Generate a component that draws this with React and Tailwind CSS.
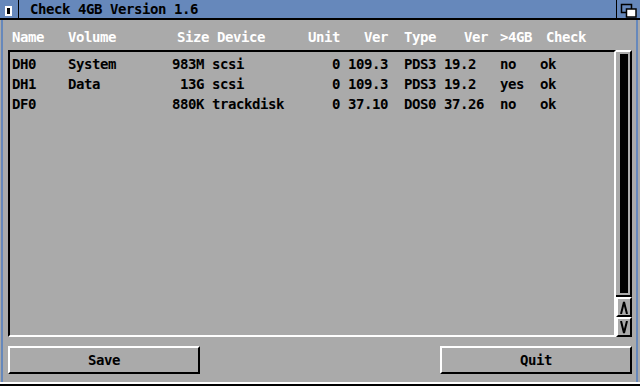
import React from 'react'

const rows = [
  ['DH0', 'System', '983M', 'scsi', '0', '109.3', 'PDS3', '19.2', 'no', 'ok'],
  ['DH1', 'Data', '13G', 'scsi', '0', '109.3', 'PDS3', '19.2', 'yes', 'ok'],
  ['DF0', '', '880K', 'trackdisk', '0', '37.10', 'DOS0', '37.26', 'no', 'ok'],
]

function fmt(r){
  return r[0].padEnd(7) + r[1].padEnd(13) + r[2].padStart(4) + ' ' + r[3].padEnd(14) + ' ' +
    r[4] + ' ' + r[5].padEnd(7) + r[6].padEnd(5) + r[7].padEnd(7) + r[8].padEnd(5) + r[9]
}

export default function App(){
  return (
    <div className="w-[640px] h-[386px] bg-[#aaaaaa] flex flex-col overflow-hidden font-['DejaVu_Sans_Mono',monospace] font-bold text-[14px] tracking-[-0.43px] leading-[20px]">
      <TitleBar />
      <div className="flex-1 ml-[1px] mr-[2px] border-x-2 border-[#6688bb] flex flex-col pl-[5px] pr-[4px]">
        <Header />
        <div className="mt-[3px] h-[287px] flex">
          <div className="flex-1 border-2 border-t-black border-l-black border-b-white border-r-white pt-[2px] pl-[2px] text-black whitespace-pre">
            {rows.map(r => <div key={r[0]}>{fmt(r)}</div>)}
          </div>
          <Scroller />
        </div>
        <div className="mt-[9px] flex justify-between">
          <Button label="Save" />
          <Button label="Quit" />
        </div>
      </div>
      <div className="h-[2px] bg-white" />
      <div className="h-[2px] bg-black" />
    </div>
  )
}

function TitleBar(){
  return (
    <div className="h-[20px] shrink-0 bg-[#6688bb] border-b-2 border-black flex leading-[18px]">
      <div className="w-[19px] border-r border-black flex items-start pl-[5px] pt-[6px]">
        <div className="w-[7px] h-[10px] bg-black border-2 border-white" />
      </div>
      <div className="flex-1 pl-[11px] text-black">Check 4GB Version 1.6</div>
      <div className="w-[24px] border-l border-black">
        <svg width="23" height="18" viewBox="0 0 23 18" className="block">
          <rect x="4.5" y="4.5" width="10" height="8" fill="#6688bb" stroke="black" strokeWidth="1.5" />
          <rect x="9.5" y="9" width="9.5" height="8" fill="white" stroke="black" strokeWidth="1.5" />
        </svg>
      </div>
    </div>
  )
}

function Header(){
  const cols = [
    ['Name', 'w-[56px]'],
    ['Volume', 'w-[109px]'],
    ['Size', 'w-[40px]'],
    ['Device', 'w-[91px]'],
    ['Unit', 'w-[56px]'],
    ['Ver', 'w-[40px]'],
    ['Type', 'w-[60px]'],
    ['Ver', 'w-[36px]'],
    ['>4GB', 'w-[46px]'],
    ['Check', ''],
  ]
  return (
    <div className="mt-[7px] h-[20px] flex pl-[4px] text-white whitespace-pre">
      {cols.map(([t, w], i) => <span key={i} className={w}>{t}</span>)}
    </div>
  )
}

function Scroller(){
  return (
    <div className="w-[16px] flex flex-col">
      <div className="h-[248px] border-t-2 border-t-white border-b-2 border-b-black border-r-2 border-r-black pt-[2px] pb-[2px] pl-[4px]">
        <div className="w-[8px] h-full bg-black" />
      </div>
      <ArrowBtn up />
      <ArrowBtn />
    </div>
  )
}

function ArrowBtn({ up }){
  return (
    <div className="h-[20px] border-2 border-t-white border-l-white border-b-black border-r-black flex items-center justify-center">
      <svg width="8" height="13" viewBox="0 0 8 13">
        <path d={up ? 'M1 13 L4 1 L7 13' : 'M1 0 L4 12 L7 0'} fill="none" stroke="black" strokeWidth="2" />
      </svg>
    </div>
  )
}

function Button({ label }){
  return (
    <div className="w-[192px] h-[28px] border-2 border-t-white border-l-white border-b-black border-r-black flex items-center justify-center text-black">
      {label}
    </div>
  )
}
